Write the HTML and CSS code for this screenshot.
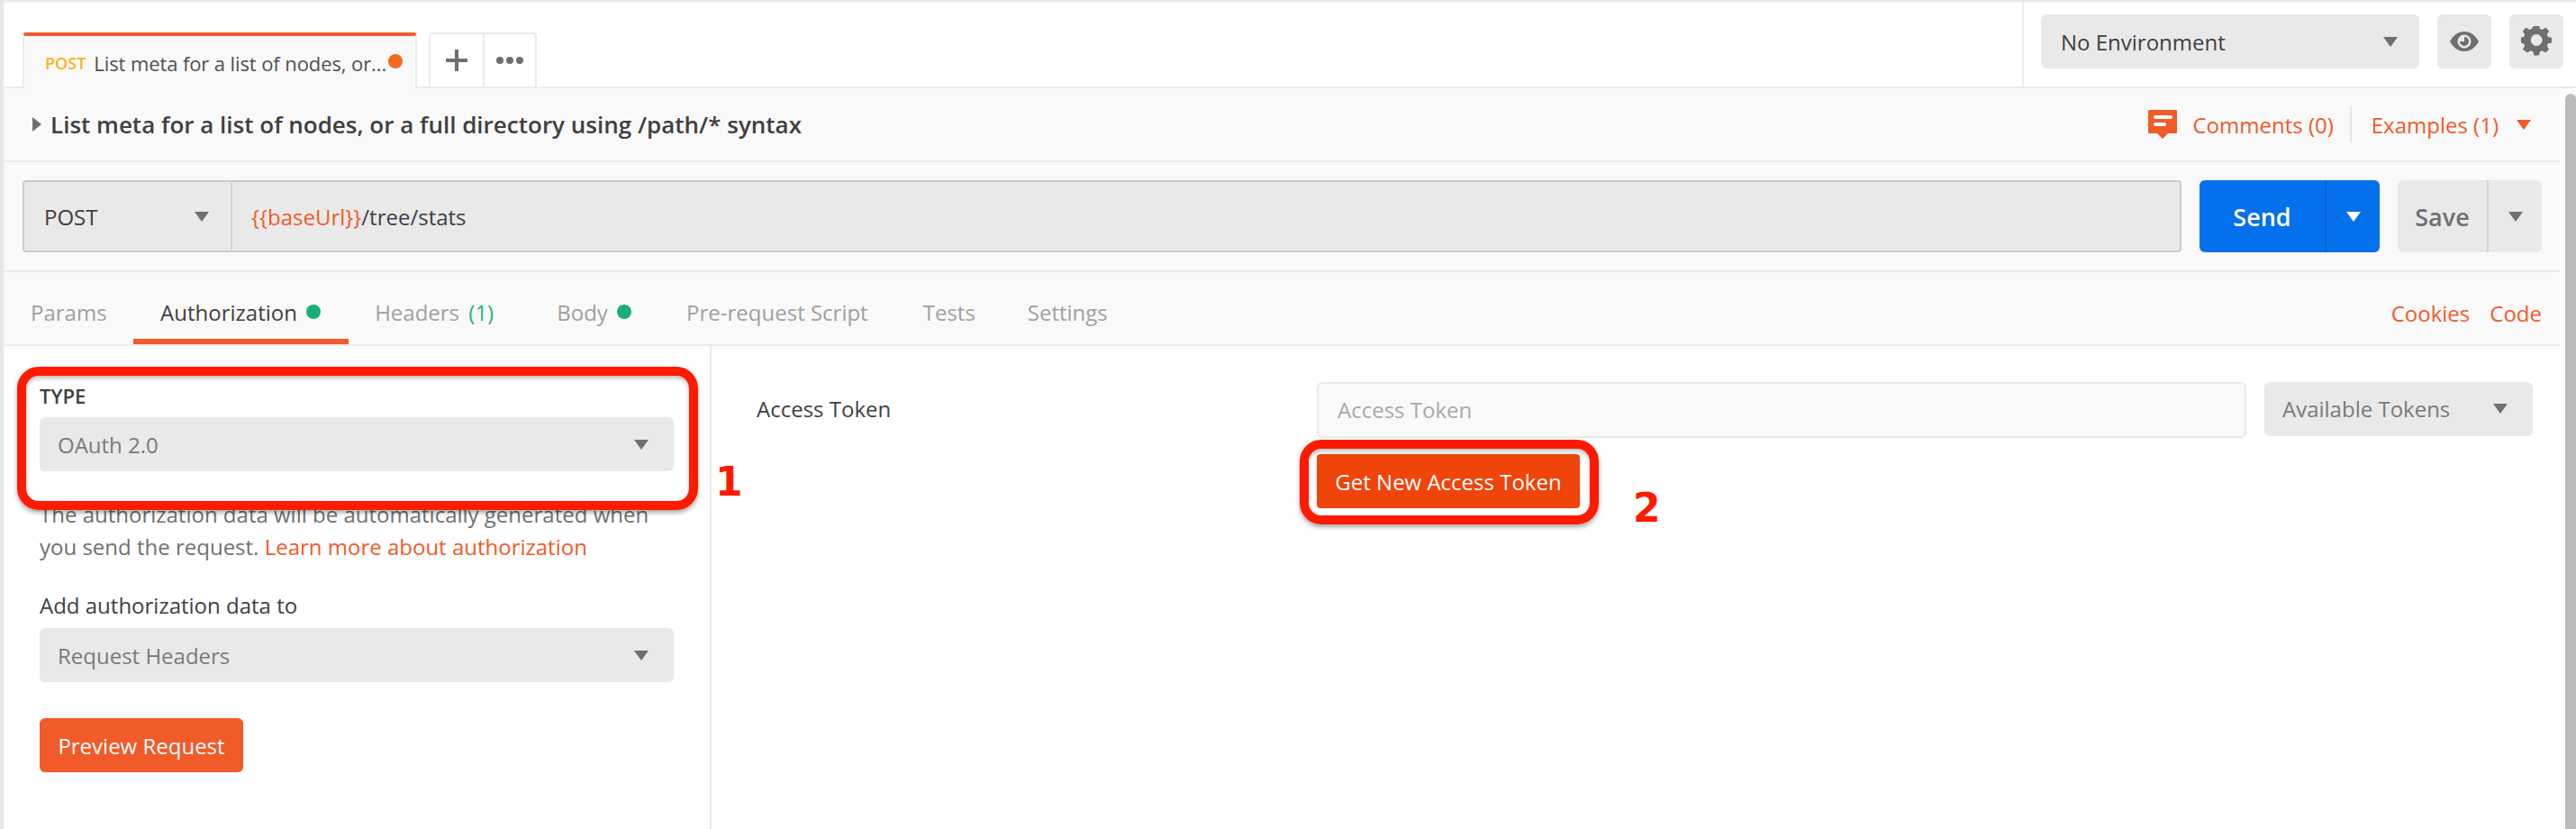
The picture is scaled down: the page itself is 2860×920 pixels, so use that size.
FILE: index.html
```html
<!DOCTYPE html>
<html lang="en">
<head>
    <meta charset="UTF-8">
    <title>Postman</title>
    <link rel="stylesheet" href="styles.css">
</head>
<body>
    <div class="app">
        <header class="topbar">
            <div class="tabs">
                <div class="tab">
                    <span class="tab-method">POST</span>
                    <span class="tab-name">List meta for a list of nodes, or...</span>
                    <span class="tab-dot"></span>
                </div>
                <div class="tab-actions">
                    <button class="tab-action">
                        <svg width="24" height="24" viewBox="0 0 24 24"><path d="M10 0h4v10h10v4H14v10h-4V14H0v-4h10z" fill="#6f6f6f"/></svg>
                    </button>
                    <button class="tab-action">
                        <svg width="32" height="10" viewBox="0 0 32 10"><circle cx="5" cy="5" r="4" fill="#6f6f6f"/><circle cx="16" cy="5" r="4" fill="#6f6f6f"/><circle cx="27" cy="5" r="4" fill="#6f6f6f"/></svg>
                    </button>
                </div>
            </div>
            <div class="env">
                <div class="env-select">
                    <span>No Environment</span>
                    <span class="caret"></span>
                </div>
                <button class="icon-btn">
                    <svg width="32" height="22" viewBox="0 0 32 22"><path fill-rule="evenodd" fill="#6f6f6f" d="M16 0c7 0 12.500 4.500 16 11-3.500 6.500-9 11-16 11S3.500 17.500 0 11C3.500 4.500 9 0 16 0zm0 3.500a7.500 7.500 0 1 0 0 15 7.500 7.500 0 0 0 0-15zm0 2.500a5 5 0 1 1-5 5h5z"/></svg>
                </button>
                <button class="icon-btn">
                    <svg width="34" height="34" viewBox="0 0 34 34"><path fill-rule="evenodd" fill="#6f6f6f" d="M14 0h6l1 4.600 3 1.300 4-2.600 4.200 4.300-2.500 4 1.200 3 4.600 1v6l-4.600 1-1.200 3 2.500 4-4.200 4.200-4-2.500-3 1.200-1 4.500h-6l-1-4.500-3-1.200-4 2.500L.3 29.600l2.500-4-1.200-3L-3 21.600v-6l4.600-1 1.200-3-2.500-4L4.500 3.300l4 2.600 3-1.300zM17 11.500a7 7 0 1 0 0 14 7 7 0 0 0 0-14z" transform="translate(1.500 -1.500) scale(.92)"/></svg>
                </button>
            </div>
        </header>

        <div class="main">
            <section class="title-row">
                <div class="title">
                    <span class="title-arrow"></span>
                    <span>List meta for a list of nodes, or a full directory using /path/* syntax</span>
                </div>
                <div class="title-links">
                    <svg width="32" height="32" viewBox="0 0 32 32"><path fill="#f15a29" d="M1 0h30a1 1 0 0 1 1 1v24a1 1 0 0 1-1 1H22l-6 6-6-6H1a1 1 0 0 1-1-1V1a1 1 0 0 1 1-1z"/><rect x="6" y="6" width="21" height="4" rx="2" fill="#fff"/><rect x="6" y="14" width="14" height="4" rx="2" fill="#fff"/></svg>
                    <a class="link comments">Comments (0)</a>
                    <span class="title-sep"></span>
                    <a class="link">Examples (1)</a>
                    <span class="caret caret-orange"></span>
                </div>
            </section>

            <section class="request-row">
                <div class="url-bar">
                    <div class="method">
                        <span>POST</span>
                        <span class="caret"></span>
                    </div>
                    <div class="url"><span class="var">{{baseUrl}}</span>/tree/stats</div>
                </div>
                <div class="split-btn send">
                    <span class="split-main">Send</span>
                    <span class="split-side"><span class="caret caret-white"></span></span>
                </div>
                <div class="split-btn save">
                    <span class="split-main">Save</span>
                    <span class="split-side"><span class="caret"></span></span>
                </div>
            </section>

            <nav class="req-tabs">
                <a class="req-tab req-tab-params">Params</a>
                <a class="req-tab active">Authorization <i class="dot"></i></a>
                <a class="req-tab req-tab-headers">Headers <em>(1)</em></a>
                <a class="req-tab">Body <i class="dot"></i></a>
                <a class="req-tab">Pre-request Script</a>
                <a class="req-tab">Tests</a>
                <a class="req-tab req-tab-settings">Settings</a>
                <div class="req-tabs-right">
                    <a class="link">Cookies</a>
                    <a class="link">Code</a>
                </div>
            </nav>

            <div class="auth">
                <aside class="auth-left">
                    <div class="type-label">TYPE</div>
                    <div class="select">
                        <span>OAuth 2.0</span>
                        <span class="caret"></span>
                    </div>
                    <p class="auth-note">The authorization data will be automatically generated when you send the request. <a class="link">Learn more about authorization</a></p>
                    <div class="add-label">Add authorization data to</div>
                    <div class="select">
                        <span>Request Headers</span>
                        <span class="caret"></span>
                    </div>
                    <button class="btn-preview">Preview Request</button>
                </aside>
                <div class="auth-right">
                    <div class="token-label">Access Token</div>
                    <div class="token-fields">
                        <div class="token-row">
                            <div class="token-input">Access Token</div>
                            <div class="select select-tokens">
                                <span>Available Tokens</span>
                                <span class="caret"></span>
                            </div>
                        </div>
                        <button class="btn-token">Get New Access Token</button>
                    </div>
                </div>
            </div>
        </div>

        <div class="scrollbar"></div>

        <!-- annotations drawn over the screenshot -->
        <div class="mark mark-type"></div>
        <div class="mark mark-token"></div>
        <div class="mark-num num-1">1</div>
        <div class="mark-num num-2">2</div>
    </div>
</body>
</html>
```

FILE: styles.css
```css
* {
    box-sizing: border-box;
}
html, body {
    margin: 0;
    height: 100%;
    overflow: hidden;
}
body {
    font-family: "Open Sans", "Noto Sans", sans-serif;
    font-size: 24px;
    color: #404040;
    background-color: #fff;
}
button {
    font-family: inherit;
    border: 0;
    padding: 0;
}
.app {
    position: relative;
    width: 2860px;
    height: 920px;
    border-left: 4px solid #e6e6e6;
    box-shadow: inset 0 3px 3px -1px #e4e4e4;
}
.link {
    color: #f15a29;
}

/* carets */
.caret {
    display: inline-block;
    width: 0;
    height: 0;
    border-left: 8px solid transparent;
    border-right: 8px solid transparent;
    border-top: 11px solid #6f6f6f;
}
.caret-orange {
    border-top-color: #f15a29;
}
.caret-white {
    border-top-color: #fff;
}

/* top bar */
.topbar {
    height: 98px;
    display: flex;
    justify-content: space-between;
    border-bottom: 2px solid #ebebeb;
}
.tabs {
    display: flex;
    align-items: flex-end;
    padding-left: 21px;
    margin-bottom: -2px;
}
.tab {
    width: 438px;
    height: 62px;
    display: flex;
    align-items: center;
    padding: 2px 0 0 23px;
    background-color: #f9f9f9;
    border-top: 4px solid #f15a29;
    border-left: 2px solid #ebebeb;
    border-right: 2px solid #ebebeb;
    border-radius: 4px 4px 0 0;
    white-space: nowrap;
}
.tab-method {
    font-size: 18px;
    font-weight: 600;
    color: #fdb022;
    margin-right: 9px;
}
.tab-name {
    font-size: 22px;
    color: #505050;
    letter-spacing: -.1px;
}
.tab-dot {
    width: 16px;
    height: 16px;
    margin: -4px 0 0 2px;
    border-radius: 50%;
    background-color: #f26b1d;
    flex-shrink: 0;
}
.tab-actions {
    display: flex;
    height: 60px;
    margin: 0 0 2px 13px;
    border: 2px solid #ebebeb;
    border-bottom: 0;
    border-radius: 4px 4px 0 0;
}
.tab-action {
    background: none;
    display: flex;
    align-items: center;
    justify-content: center;
    width: 58px;
    height: 58px;
}
.tab-action + .tab-action {
    width: 58px;
    border-left: 2px solid #ebebeb;
}
.env {
    width: 615px;
    display: flex;
    gap: 20px;
    padding: 16px 0 0 19px;
    border-left: 2px solid #ebebeb;
}
.env-select {
    width: 420px;
    height: 60px;
    display: flex;
    align-items: center;
    justify-content: space-between;
    padding: 0 24px 0 22px;
    background-color: #e9e9e9;
    border-radius: 6px;
    font-size: 24px;
    color: #404040;
}
.icon-btn {
    width: 60px;
    height: 60px;
    display: flex;
    align-items: center;
    justify-content: center;
    background-color: #e9e9e9;
    border-radius: 6px;
}

/* main column stops short of the scrollbar */
.main {
    width: 2838px;
}
.title-row {
    height: 82px;
    display: flex;
    align-items: center;
    justify-content: space-between;
    padding: 0 32px 0 32px;
    background-color: #f9f9f9;
    border-bottom: 2px solid #ebebeb;
}
.title {
    display: flex;
    align-items: center;
    font-size: 26px;
    font-weight: 600;
    color: #404040;
}
.title-arrow {
    width: 0;
    height: 0;
    margin-right: 10px;
    border-top: 8px solid transparent;
    border-bottom: 8px solid transparent;
    border-left: 10px solid #6f6f6f;
}
.title-links {
    display: flex;
    align-items: center;
    font-size: 24px;
}
.comments {
    margin-left: 17px;
}
.title-sep {
    width: 2px;
    height: 40px;
    margin: 0 22px 0 18px;
    background-color: #e4e4e4;
}
.caret-orange {
    margin-left: 20px;
}
.request-row {
    height: 122px;
    display: flex;
    gap: 20px;
    padding: 20px 20px 0 21px;
    background-color: #f9f9f9;
    border-bottom: 2px solid #ebebeb;
}
.url-bar {
    flex: 1;
    height: 80px;
    display: flex;
    background-color: #e9e9e9;
    border: 2px solid #cccccc;
    border-radius: 4px;
}
.method {
    width: 231px;
    display: flex;
    align-items: center;
    justify-content: space-between;
    padding: 0 24px 0 22px;
    border-right: 2px solid #d4d4d4;
    font-size: 24px;
}
.url {
    flex: 1;
    display: flex;
    align-items: center;
    padding-left: 21px;
    font-size: 24px;
    white-space: pre;
}
.var {
    color: #f15a29;
}
.split-btn {
    height: 80px;
    display: flex;
    border-radius: 6px;
    overflow: hidden;
    font-size: 27px;
    font-weight: 600;
}
.split-main {
    display: flex;
    align-items: center;
    justify-content: center;
}
.split-side {
    display: flex;
    align-items: center;
    justify-content: center;
    flex: 1;
}
.send {
    width: 200px;
    background-color: #0470eb;
    color: #fff;
}
.send .split-main {
    width: 139px;
}
.send .split-side {
    border-left: 2px solid #0a63cc;
}
.save {
    width: 160px;
    background-color: #e9e9e9;
    color: #6f6f6f;
}
.save .split-main {
    width: 99px;
}
.save .split-side {
    border-left: 2px solid #d4d4d4;
}

/* request tabs */
.req-tabs {
    height: 82px;
    display: flex;
    padding-left: 21px;
    background-color: #f9f9f9;
    border-bottom: 2px solid #ebebeb;
}
.req-tab {
    display: flex;
    align-items: center;
    height: 80px;
    padding: 8px 30.500px 0;
    font-size: 24px;
    color: #a0a0a0;
    white-space: pre;
}
.req-tab-params {
    padding: 8px 9px 0;
    margin-right: 20px;
}
.req-tab-headers {
    margin: 0 9px 0 -1px;
}
.req-tab-settings {
    margin-left: -3px;
}
.req-tab em {
    font-style: normal;
    color: #1fb27c;
    margin-left: 4px;
}
.req-tab.active {
    color: #404040;
    border-bottom: 6px solid #f15a29;
    padding-top: 14px;
}
.dot {
    width: 16px;
    height: 16px;
    margin-left: 4px;
    border-radius: 50%;
    background-color: #1aaf78;
}
.req-tabs-right {
    margin-left: auto;
    display: flex;
    align-items: center;
    gap: 22px;
    padding: 10px 20px 0 0;
}

/* auth panes */
.auth {
    display: flex;
}
.auth-left {
    width: 786px;
    height: 536px;
    padding: 40px 40px 0 40px;
    border-right: 2px solid #ebebeb;
}
.type-label {
    font-size: 22px;
    font-weight: 600;
    line-height: 30px;
    margin-bottom: 9px;
    color: #404040;
}
.select {
    height: 60px;
    display: flex;
    align-items: center;
    justify-content: space-between;
    padding: 0 28px 0 20px;
    background-color: #e9e9e9;
    border-radius: 6px;
    font-size: 24px;
    color: #7a7a7a;
}
.auth-note {
    margin: 30px 0 0;
    line-height: 36px;
    font-size: 24px;
    color: #707070;
}
.add-label {
    margin-top: 29px;
    line-height: 36px;
    font-size: 24px;
    color: #404040;
}
.auth-left .add-label + .select {
    margin-top: 7px;
}
.btn-preview {
    display: block;
    margin-top: 40px;
    width: 226px;
    height: 60px;
    background-color: #f15a29;
    color: #fff;
    font-size: 24px;
    border-radius: 6px;
}
.auth-right {
    flex: 1;
    display: flex;
    padding: 40px 30px 0 50px;
}
.token-label {
    width: 622px;
    padding-top: 13px;
    font-size: 24px;
    color: #404040;
}
.token-fields {
    flex: 1;
}
.token-row {
    display: flex;
    gap: 20px;
}
.token-input {
    flex: 1;
    height: 62px;
    display: flex;
    align-items: center;
    padding: 0 0 2px 21px;
    background-color: #f9f9f9;
    border: 2px solid #e9e9e9;
    border-radius: 6px;
    color: #a8a8a8;
    font-size: 24px;
}
.select-tokens {
    width: 298px;
    padding: 0 28px 2px 20px;
}
.btn-token {
    display: block;
    margin-top: 18px;
    width: 292px;
    height: 60px;
    background-color: #ef440a;
    color: #fff;
    font-size: 24px;
    border-radius: 4px;
}

/* scrollbar */
.scrollbar {
    position: absolute;
    left: 2844px;
    top: 104px;
    width: 12px;
    bottom: 0;
    background-color: #bbbbbb;
    border-radius: 6px 6px 0 0;
}

/* red annotations */
.mark {
    position: absolute;
    border: 10px solid #ff1a00;
    border-radius: 24px;
    box-shadow: 0 3px 5px rgba(0,0,0,.35), inset 0 3px 4px rgba(0,0,0,.25);
}
.mark-type {
    left: 15px;
    top: 407px;
    width: 756px;
    height: 159px;
}
.mark-token {
    left: 1439px;
    top: 488px;
    width: 332px;
    height: 94px;
}
.mark-num {
    position: absolute;
    color: #ff1a00;
    font-family: "DejaVu Sans", sans-serif;
    font-size: 44px;
    font-weight: 700;
    line-height: 44px;
}
.num-1 {
    left: 790px;
    top: 513px;
}
.num-2 {
    left: 1809px;
    top: 542px;
}
```
